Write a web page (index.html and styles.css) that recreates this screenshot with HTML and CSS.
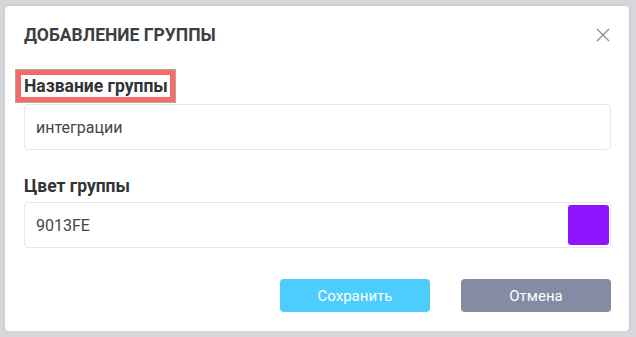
FILE: index.html
```html
<!DOCTYPE html>
<html lang="ru">
<head>
    <meta charset="UTF-8">
    <meta name="viewport" content="width=device-width, initial-scale=1.0">
    <title>Добавление группы</title>
    <link rel="stylesheet" href="styles.css">
</head>
<body>

<div class="modal">
    <div class="modal-header">
        <h1 class="modal-title">Добавление группы</h1>
        <button class="close-button" aria-label="Закрыть">
            <svg width="14" height="14" viewBox="0 0 14 14">
                <path d="M1 1 L13 13 M13 1 L1 13" stroke="#8a8f99" stroke-width="1.4" fill="none"/>
            </svg>
        </button>
    </div>

    <!-- Group name -->
    <label class="field-label highlighted" for="groupName">Название группы</label>
    <div class="input-box">
        <input id="groupName" class="input-field" type="text" value="интеграции">
    </div>

    <!-- Group colour -->
    <label class="field-label second" for="groupColor">Цвет группы</label>
    <div class="input-box">
        <input id="groupColor" class="input-field" type="text" value="9013FE">
        <span class="color-swatch"></span>
    </div>

    <div class="modal-buttons">
        <button class="button save">Сохранить</button>
        <button class="button cancel">Отмена</button>
    </div>
</div>

</body>
</html>
```

FILE: styles.css
```css
/* Global Styles */
body {
    font-family: 'Roboto', 'Liberation Sans', sans-serif;
    background-color: #d6d7db;
    margin: 0;
    padding: 0;
}

.modal {
    box-sizing: border-box;
    width: 624px;
    height: 325px;
    margin: 6px 0 0 5px;
    padding: 0 18px 0 19px;
    background-color: #ffffff;
    border-radius: 4px;
    box-shadow: 0 0 3px rgba(0, 0, 0, 0.12);
    display: flex;
    flex-direction: column;
}

.modal-header {
    height: 58px;
    display: flex;
    justify-content: space-between;
    align-items: center;
}

.modal-title {
    margin: 0;
    font-size: 17.5px;
    font-weight: 700;
    text-transform: uppercase;
    color: #3e3e42;
}

.close-button {
    background: none;
    border: none;
    padding: 0;
    margin-right: 1px;
    width: 14px;
    height: 14px;
    cursor: pointer;
}

.field-label {
    display: block;
    font-size: 17.5px;
    font-weight: 700;
    line-height: 22px;
    color: #333336;
}

/* Highlighted label */
.highlighted {
    align-self: flex-start;
    margin: 6px 0 0 -8px;
    padding: 0 2px 0 3px;
    border: 5px solid #f26d6a;
    box-shadow: 0 0 0 1px #bca58c;
}

.second {
    margin-top: 25px;
    margin-bottom: 5px;
}

.input-box {
    box-sizing: border-box;
    height: 46px;
    margin-top: 2px;
    border: 1px solid #e6e6eb;
    border-radius: 4px;
    display: flex;
    align-items: center;
    padding: 0 1px 0 11px;
}

.second + .input-box {
    margin-top: 0;
}

.input-field {
    flex: 1;
    border: none;
    outline: none;
    padding: 0;
    font-family: inherit;
    font-size: 16px;
    color: #46464a;
    background: transparent;
}

.color-swatch {
    width: 41px;
    height: 40px;
    border-radius: 3px;
    background-color: #9013fe;
}

.modal-buttons {
    margin-top: 31px;
    display: flex;
    justify-content: flex-end;
    gap: 31px;
}

.button {
    width: 150px;
    height: 33px;
    border: none;
    border-radius: 4px;
    font-family: inherit;
    font-size: 15px;
    color: #ffffff;
    cursor: pointer;
}

.save {
    background-color: #4dcdfe;
}

.cancel {
    background-color: #838ca3;
}
```
